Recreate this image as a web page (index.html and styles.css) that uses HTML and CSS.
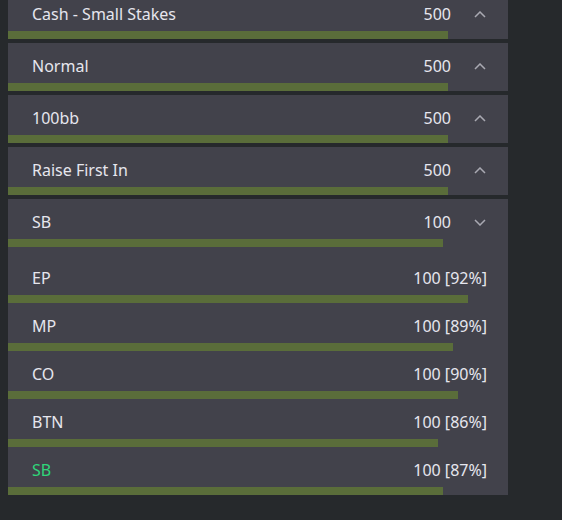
FILE: index.html
```html
<!DOCTYPE html>
<html>
<head>
    <title>Ranges</title>
    <link rel="stylesheet" href="styles.css">
</head>
<body>
    <div class="tree">
        <div class="node">
            <div class="row">
                <div class="row-main">
                    <span class="label">Cash - Small Stakes</span>
                    <span class="value">500</span>
                    <svg class="chevron" viewBox="0 0 12 7"><path d="M1 6 L6 1 L11 6"/></svg>
                </div>
                <div class="bar-track"><div class="bar" style="width: 88%"></div></div>
            </div>
        </div>
        <div class="node">
            <div class="row">
                <div class="row-main">
                    <span class="label">Normal</span>
                    <span class="value">500</span>
                    <svg class="chevron" viewBox="0 0 12 7"><path d="M1 6 L6 1 L11 6"/></svg>
                </div>
                <div class="bar-track"><div class="bar" style="width: 88%"></div></div>
            </div>
        </div>
        <div class="node">
            <div class="row">
                <div class="row-main">
                    <span class="label">100bb</span>
                    <span class="value">500</span>
                    <svg class="chevron" viewBox="0 0 12 7"><path d="M1 6 L6 1 L11 6"/></svg>
                </div>
                <div class="bar-track"><div class="bar" style="width: 88%"></div></div>
            </div>
        </div>
        <div class="node">
            <div class="row">
                <div class="row-main">
                    <span class="label">Raise First In</span>
                    <span class="value">500</span>
                    <svg class="chevron" viewBox="0 0 12 7"><path d="M1 6 L6 1 L11 6"/></svg>
                </div>
                <div class="bar-track"><div class="bar" style="width: 88%"></div></div>
            </div>
        </div>
        <div class="node">
            <div class="row">
                <div class="row-main">
                    <span class="label">SB</span>
                    <span class="value">100</span>
                    <svg class="chevron" viewBox="0 0 12 7"><path d="M1 1 L6 6 L11 1"/></svg>
                </div>
                <div class="bar-track"><div class="bar" style="width: 87%"></div></div>
            </div>
            <div class="children">
                <div class="row">
                    <div class="row-main">
                        <span class="label">EP</span>
                        <span class="value leaf">100 [92%]</span>
                    </div>
                    <div class="bar-track"><div class="bar" style="width: 92%"></div></div>
                </div>
                <div class="row">
                    <div class="row-main">
                        <span class="label">MP</span>
                        <span class="value leaf">100 [89%]</span>
                    </div>
                    <div class="bar-track"><div class="bar" style="width: 89%"></div></div>
                </div>
                <div class="row">
                    <div class="row-main">
                        <span class="label">CO</span>
                        <span class="value leaf">100 [90%]</span>
                    </div>
                    <div class="bar-track"><div class="bar" style="width: 90%"></div></div>
                </div>
                <div class="row">
                    <div class="row-main">
                        <span class="label">BTN</span>
                        <span class="value leaf">100 [86%]</span>
                    </div>
                    <div class="bar-track"><div class="bar" style="width: 86%"></div></div>
                </div>
                <div class="row">
                    <div class="row-main">
                        <span class="label active">SB</span>
                        <span class="value leaf">100 [87%]</span>
                    </div>
                    <div class="bar-track"><div class="bar" style="width: 87%"></div></div>
                </div>
            </div>
        </div>
    </div>
</body>
</html>
```

FILE: styles.css
```css
body {
    margin: 0;
    background-color: #26292c;
    font-family: "Noto Sans", sans-serif;
    font-size: 16px;
    color: #e6e6ee;
    height: 520px;
    overflow: hidden;
}
.tree {
    width: 500px;
    margin: -9px 0 0 8px;
    display: flex;
    flex-direction: column;
    gap: 4px;
}
.node {
    background-color: #42424b;
}
.children {
    padding-top: 8px;
}
.row {
    height: 48px;
    display: flex;
    flex-direction: column;
}
.row-main {
    flex: 1;
    display: flex;
    align-items: center;
    padding: 6px 22px 0 24px;
}
.label {
    flex: 1;
}
.label.active {
    color: #2fd67a;
}
.value {
    margin-right: 23px;
}
.value.leaf {
    margin-right: -1px;
}
.chevron {
    width: 12px;
    height: 7px;
    fill: none;
    stroke: #a9a9b2;
    stroke-width: 1.5;
}
.bar-track {
    height: 8px;
}
.bar {
    height: 100%;
    background-color: #5a6d3a;
}
```
